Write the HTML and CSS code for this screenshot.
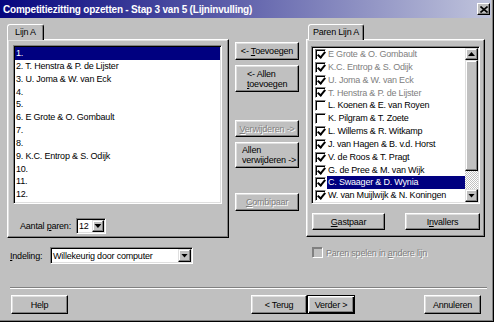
FILE: index.html
```html
<!DOCTYPE html>
<html lang="nl">
<head>
    <meta charset="UTF-8">
    <title>Competitiezitting opzetten - Stap 3 van 5 (Lijninvulling)</title>
    <link rel="stylesheet" href="styles.css">
</head>
<body>
<div class="window">
    <!-- Title bar -->
    <div class="titlebar">
        <span class="title">Competitiezitting opzetten - Stap 3 van 5 (Lijninvulling)</span>
        <span class="close">
            <svg width="8" height="7" viewBox="0 0 8 7"><path d="M0.5 0.5 L7.5 6.5 M7.5 0.5 L0.5 6.5" stroke="#000" stroke-width="1.6"/></svg>
        </span>
    </div>

    <div class="content">
        <div class="main">
            <!-- Lijn A -->
            <div class="left">
                <div class="tab tab-left">Lijn A</div>
                <div class="pane pane-left">
                    <ul class="listbox">
                        <li class="selected">1.</li>
                        <li>2. T. Henstra &amp; P. de Lijster</li>
                        <li>3. U. Joma &amp; W. van Eck</li>
                        <li>4.</li>
                        <li>5.</li>
                        <li>6. E Grote &amp; O. Gombault</li>
                        <li>7.</li>
                        <li>8.</li>
                        <li>9. K.C. Entrop &amp; S. Odijk</li>
                        <li>10.</li>
                        <li>11.</li>
                        <li>12.</li>
                    </ul>
                    <div class="count-row">
                        <span class="count-label">Aantal <u>p</u>aren:</span>
                        <div class="combo combo-count">
                            <span class="combo-value">12</span>
                            <span class="drop"><i class="arrow-down"></i></span>
                        </div>
                    </div>
                </div>
            </div>

            <!-- Middle buttons -->
            <div class="middle">
                <button class="btn btn-add">&lt;- <u>T</u>oevoegen</button>
                <button class="btn btn-add-all">&lt;- Allen<br><u>t</u>oevoegen</button>
                <button class="btn btn-remove" disabled><u>V</u>erwijderen -&gt;</button>
                <button class="btn btn-remove-all">Allen<br>verwi<u>j</u>deren -&gt;</button>
                <button class="btn btn-combi" disabled><u>C</u>ombipaar</button>
            </div>

            <!-- Paren Lijn A -->
            <div class="right">
                <div class="tab tab-right">Paren Lijn A</div>
                <div class="pane pane-right">
                    <div class="checklist">
                        <ul class="items">
                            <li class="grey"><span class="cb on"></span><span class="name">E Grote &amp; O. Gombault</span></li>
                            <li class="grey"><span class="cb on"></span><span class="name">K.C. Entrop &amp; S. Odijk</span></li>
                            <li class="grey"><span class="cb on"></span><span class="name">U. Joma &amp; W. van Eck</span></li>
                            <li class="grey"><span class="cb on"></span><span class="name">T. Henstra &amp; P. de Lijster</span></li>
                            <li><span class="cb"></span><span class="name">L. Koenen &amp; E. van Royen</span></li>
                            <li><span class="cb"></span><span class="name">K. Pilgram &amp; T. Zoete</span></li>
                            <li><span class="cb on"></span><span class="name">L. Willems &amp; R. Witkamp</span></li>
                            <li><span class="cb on"></span><span class="name">J. van Hagen &amp; B. v.d. Horst</span></li>
                            <li><span class="cb on"></span><span class="name">V. de Roos &amp; T. Pragt</span></li>
                            <li><span class="cb on"></span><span class="name">G. de Pree &amp; M. van Wijk</span></li>
                            <li class="selected"><span class="cb on"></span><span class="name">C. Swaager &amp; D. Wynia</span></li>
                            <li><span class="cb on"></span><span class="name">W. van Muijlwijk &amp; N. Koningen</span></li>
                            <li><span class="cb on"></span><span class="name">&nbsp;</span></li>
                        </ul>
                        <div class="scrollbar">
                            <span class="sb-btn sb-up"><i class="arrow-up"></i></span>
                            <span class="thumb"></span>
                            <span class="track"></span>
                            <span class="sb-btn sb-down"><i class="arrow-down"></i></span>
                        </div>
                    </div>
                    <div class="pair-buttons">
                        <button class="btn btn-guest"><u>G</u>astpaar</button>
                        <button class="btn btn-subs">I<u>n</u>vallers</button>
                    </div>
                </div>
            </div>
        </div>

        <!-- Options -->
        <div class="options">
            <div class="options-left">
                <span class="layout-label"><u>I</u>ndeling:</span>
                <div class="combo combo-layout">
                    <span class="combo-value">Willekeurig door computer</span>
                    <span class="drop"><i class="arrow-down"></i></span>
                </div>
            </div>
            <div class="options-right">
                <span class="cb disabled"></span>
                <span class="disabled-text">Paren spelen in <u>a</u>ndere lijn</span>
            </div>
        </div>

        <div class="separator"></div>

        <div class="footer">
            <button class="btn btn-help">Help</button>
            <button class="btn btn-back">&lt; Terug</button>
            <button class="btn btn-next">Verder &gt;</button>
            <button class="btn btn-cancel">Annuleren</button>
        </div>
    </div>
</div>
</body>
</html>
```

FILE: styles.css
```css
/* Reset */
* {
    margin: 0;
    padding: 0;
    box-sizing: border-box;
}

body {
    width: 494px;
    height: 322px;
    overflow: hidden;
    background: #c0c0c0;
    font-family: "Liberation Sans", Arial, sans-serif;
    font-size: 9px;
    letter-spacing: -0.2px;
    color: #000;
}

u {
    text-decoration: underline;
    text-underline-offset: 1px;
}

.window {
    width: 494px;
    height: 322px;
    padding-right: 3px;
    box-shadow: inset -1px -1px #000, inset -2px -2px #808080;
}

/* Title bar */
.titlebar {
    height: 18px;
    display: flex;
    align-items: center;
    padding: 0 1px 0 3px;
    background: linear-gradient(to right, #06067e, #c0c4dc);
    color: #fff;
    font-size: 10px;
    font-weight: bold;
}

.close {
    margin-left: auto;
    width: 13px;
    height: 12px;
    display: flex;
    align-items: center;
    justify-content: center;
    background: #c0c0c0;
    border: 1px solid;
    border-color: #fff #000 #000 #fff;
    box-shadow: inset -1px -1px #808080;
}

.content {
    padding: 6px 0 0 7px;
}

.main {
    display: flex;
    align-items: flex-start;
}

/* Tabs and panes */
.tab {
    position: relative;
    z-index: 1;
    height: 16px;
    margin-bottom: -1px;
    background: #c0c0c0;
    border: 1px solid;
    border-bottom: none;
    border-color: #fff #000 transparent #fff;
    border-radius: 3px 3px 0 0;
    box-shadow: inset -1px 0 #808080;
    line-height: 14px;
    text-align: center;
}

.tab-left {
    width: 37px;
}

.tab-right {
    width: 56px;
    margin-left: 2px;
}

.pane {
    border: 1px solid;
    border-color: #fff #000 #000 #fff;
    box-shadow: inset -1px -1px #808080, inset 1px 1px #dfdfdf;
}

.left {
    width: 222px;
}

.pane-left {
    height: 199px;
    padding: 5px;
}

/* Sunken fields */
.listbox,
.checklist,
.combo {
    background: #fff;
    border: 1px solid;
    border-color: #808080 #fff #fff #808080;
    box-shadow: inset 1px 1px #000, inset -1px -1px #dfdfdf;
    padding: 1px;
}

.listbox {
    list-style: none;
    width: 209px;
    height: 159px;
    overflow: hidden;
}

.listbox li {
    height: 12.85px;
    line-height: 12.85px;
    padding-left: 1px;
    white-space: nowrap;
}

.listbox li.selected,
.items li.selected .name {
    background: #000080;
    color: #fff;
}

.count-row {
    display: flex;
    align-items: center;
    gap: 5px;
    margin-top: 14px;
    padding-left: 7px;
}

.combo {
    display: flex;
}

.combo-count {
    width: 30px;
    height: 16px;
}

.combo-layout {
    width: 143px;
    height: 17px;
}

.combo-value {
    flex: 1;
    padding-left: 1px;
    white-space: nowrap;
    overflow: hidden;
    display: flex;
    align-items: center;
}

.drop,
.sb-btn {
    width: 12px;
    flex: none;
    display: flex;
    align-items: center;
    justify-content: center;
    background: #c0c0c0;
    border: 1px solid;
    border-color: #dfdfdf #000 #000 #dfdfdf;
    box-shadow: inset -1px -1px #808080, inset 1px 1px #fff;
}

.combo-layout .drop {
    width: 13px;
}

.arrow-down,
.arrow-up {
    display: block;
    width: 7px;
    height: 4px;
    background: #000;
}

.arrow-down {
    clip-path: polygon(0 0, 100% 0, 50% 100%);
}

.arrow-up {
    clip-path: polygon(50% 0, 100% 100%, 0 100%);
}

/* Buttons */
.btn {
    display: block;
    padding: 0;
    font: inherit;
    letter-spacing: inherit;
    color: #000;
    background: #c0c0c0;
    border: 1px solid;
    border-color: #fff #000 #000 #fff;
    box-shadow: inset -1px -1px #808080, inset 1px 1px #dfdfdf;
    line-height: 10px;
    text-align: center;
}

.btn:disabled {
    color: #808080;
    text-shadow: 1px 1px #fff;
}

.middle {
    width: 64px;
    margin-left: 6px;
    padding-top: 18px;
    display: flex;
    flex-direction: column;
}

.middle .btn {
    width: 64px;
}

.btn-add {
    height: 18px;
}

.btn-add-all {
    height: 27px;
    margin-top: 5px;
    text-align: left;
    padding-left: 11px;
}

.btn-remove {
    height: 17px;
    margin-top: 28px;
}

.btn-remove-all {
    height: 26px;
    margin-top: 5px;
    text-align: left;
    padding-left: 6px;
}

.btn-combi {
    height: 18px;
    margin-top: 25px;
}

/* Checklist */
.right {
    width: 179px;
    margin-left: 7px;
}

.pane-right {
    height: 198px;
    padding: 6px 4px 0 4px;
}

.checklist {
    display: flex;
    width: 169px;
    height: 158px;
}

.items {
    flex: 1;
    list-style: none;
    overflow: hidden;
}

.items li {
    display: flex;
    align-items: center;
    height: 12.85px;
    padding-left: 2px;
    white-space: nowrap;
}

.items li.grey .name {
    color: #808080;
}

.name {
    flex: 1;
    height: 100%;
    margin-left: 1px;
    padding-left: 1px;
    line-height: 12.85px;
}

.cb {
    position: relative;
    flex: none;
    width: 11px;
    height: 11px;
    background: #fff;
    border: 1px solid;
    border-color: #808080 #fff #fff #808080;
    box-shadow: inset 1px 1px #000;
}

.cb.on::after {
    content: "";
    position: absolute;
    left: 3px;
    top: 0;
    width: 3px;
    height: 6px;
    border: solid #000;
    border-width: 0 2px 2px 0;
    transform: rotate(40deg);
}

.cb.disabled {
    background: #c0c0c0;
    border-color: #808080 #fff #fff #808080;
    box-shadow: inset 1px 1px #808080;
}

.scrollbar {
    width: 13px;
    flex: none;
    display: flex;
    flex-direction: column;
}

.sb-btn {
    width: 13px;
    height: 12px;
}

.sb-down {
    height: 13px;
}

.thumb {
    height: 111px;
    background: #c0c0c0;
    border: 1px solid;
    border-color: #dfdfdf #000 #000 #dfdfdf;
    box-shadow: inset -1px -1px #808080, inset 1px 1px #fff;
}

.track {
    flex: 1;
    background-color: #c0c0c0;
    background-image: repeating-conic-gradient(#fff 0 25%, #c0c0c0 0 50%);
    background-size: 2px 2px;
}

.pair-buttons {
    display: flex;
    justify-content: space-between;
    margin-top: 9px;
    padding-left: 1px;
}

.btn-guest {
    width: 73px;
    height: 17px;
}

.btn-subs {
    width: 75px;
    height: 17px;
}

/* Options row */
.options {
    display: flex;
    height: 17px;
    margin-top: 9px;
}

.options-left {
    width: 299px;
    display: flex;
    align-items: center;
    padding-left: 3px;
}

.layout-label {
    width: 40px;
}

.options-right {
    display: flex;
    align-items: center;
    gap: 3px;
    height: 11px;
    padding-left: 6px;
}

.disabled-text {
    color: #808080;
    text-shadow: 1px 1px #fff;
}

.separator {
    width: 477px;
    height: 2px;
    margin: 23px 0 0 3px;
    border-top: 1px solid #808080;
    border-bottom: 1px solid #fff;
}

/* Footer */
.footer {
    display: flex;
    margin-top: 6px;
    padding-left: 4px;
}

.footer .btn {
    height: 19px;
}

.btn-help {
    width: 57px;
}

.btn-back {
    width: 56px;
    margin-left: 183px;
}

.btn-next {
    width: 48px;
    border-color: #000;
    box-shadow: inset 1px 1px #fff, inset -1px -1px #000, inset -2px -2px #808080, inset 2px 2px #dfdfdf;
}

.btn-cancel {
    width: 57px;
    margin-left: 69px;
}
```
